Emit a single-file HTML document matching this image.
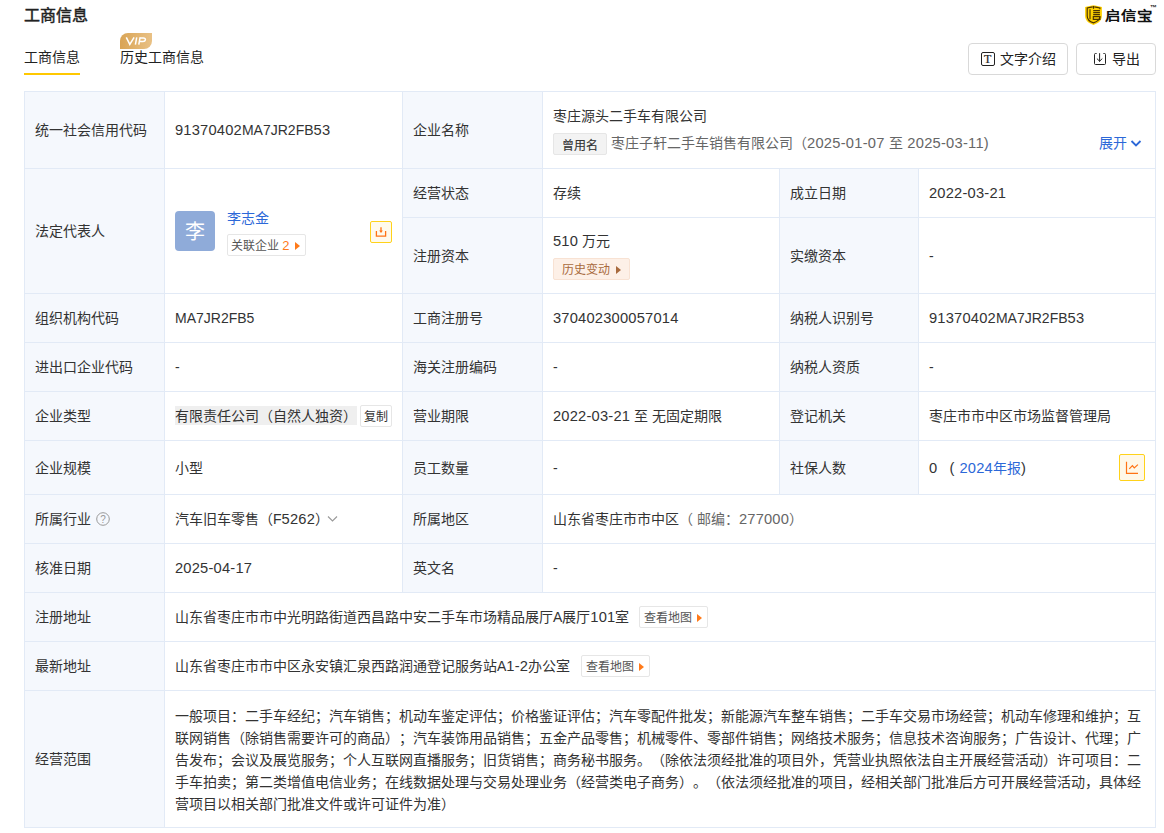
<!DOCTYPE html>
<html lang="zh-CN"><head><meta charset="utf-8">
<style>
*{box-sizing:border-box}
html,body{margin:0;padding:0}
body{width:1164px;height:833px;overflow:hidden;background:#fff;font-family:"Liberation Sans",sans-serif;font-size:14px;color:#333;position:relative;text-spacing-trim:space-all}
.a{position:absolute;white-space:nowrap;line-height:20px}
.bg{position:absolute;background:#f5f8fd}
.h{position:absolute;height:1px;background:#e2eaf6;left:24px;width:1132px}
.v{position:absolute;width:1px;background:#e2eaf6}
.c{position:absolute;display:flex;align-items:center;white-space:nowrap;line-height:20px}
.blue{color:#2c68d8}
.n{font-size:14.7px;letter-spacing:.2px}
.tag{display:inline-block;border:1px solid #e6e6e6;border-radius:2px;font-size:12px;line-height:20px;height:22px;padding-top:1px!important;color:#555;padding:0 4px;background:#fff}
.tri{display:inline-block;width:0;height:0;border-left:5px solid #ff7a1a;border-top:4px solid transparent;border-bottom:4px solid transparent;margin-left:5px;vertical-align:0px}
</style></head><body>

<!-- header -->
<div class="a" id="title" style="left:24px;top:5px;font-size:16px;font-weight:400;-webkit-text-stroke:.45px #222;color:#222;line-height:22px">工商信息</div>

<!-- logo -->
<svg class="a" style="left:1085px;top:5px" width="17" height="20" viewBox="0 0 17 20">
  <path d="M8.5 0.2 C11 0.7 14 1.3 16.9 1.9 V10.8 C16.9 15.6 13 18.6 8.5 20 C4 18.6 0.1 15.6 0.1 10.8 V1.9 C3 1.3 6 0.7 8.5 0.2 Z" fill="#ffd100"/>
  <g stroke="#4a3200" stroke-width="1.15" fill="none">
  <path d="M7.7 1.9 L2.2 3 V11 C2.2 14.6 5 16.8 8.5 17.9 C12 16.8 14.9 14.6 14.9 11.6"/>
  <path d="M9.3 1.9 L14.9 3 V4.2"/>
  <path d="M8.5 1 V3.8"/>
  <path d="M5 4.2 V14.2"/>
  <path d="M8.2 5.6 H14.9 M8.2 7.6 H14.9 M8.2 9.6 H14.9"/>
  <path d="M8.3 11.6 H14.9 V14.4 H8.3 Z"/>
  </g>
</svg>
<div class="a" id="logo" style="left:1105px;top:8px;font-size:15.5px;font-weight:bold;color:#111;line-height:20px;transform:scaleY(.82);transform-origin:0 0">启信宝</div>
<div class="a" style="left:1150px;top:4px;font-size:7px;font-weight:bold;line-height:8px;color:#222">™</div>

<!-- tabs -->
<div class="a" id="tab1" style="left:24px;top:47px;color:#222">工商信息</div>
<div style="position:absolute;left:24px;top:73px;width:56px;height:2px;background:#ffc800"></div>
<div style="position:absolute;left:120px;top:33px;width:32px;height:16px;border-radius:8px 0 8px 0;background:linear-gradient(90deg,#d9a455,#e9c185)"></div>
<svg class="a" style="left:116px;top:30px" width="40" height="22" viewBox="0 0 40 22"><path d="M10.3 7.3 L13.8 14.4 L18.1 7.3 M20.7 7.3 L19.4 14.6 M24.1 7.3 L22.8 14.6 M23.6 7.9 H27.3 C28.9 7.9 29.6 8.7 29.4 9.7 C29.2 10.9 28.2 11.6 26.8 11.6 H23.4" stroke="#fff" stroke-width="1.5" fill="none"/></svg>
<div class="a" id="tab2" style="left:120px;top:47px;color:#222">历史工商信息</div>

<!-- buttons -->
<div style="position:absolute;left:968px;top:43px;width:100px;height:32px;border:1px solid #d9d9d9;border-radius:4px"></div>
<div style="position:absolute;left:981px;top:52px;width:14px;height:14px;border:1px solid #222;border-radius:2px"></div>
<div class="a" style="left:984px;top:51px;font-family:'Liberation Serif',serif;font-size:12px;line-height:16px;color:#222;-webkit-text-stroke:.2px #222">T</div>
<div class="a" style="left:1000px;top:49px;color:#222">文字介绍</div>
<div style="position:absolute;left:1076px;top:43px;width:80px;height:32px;border:1px solid #d9d9d9;border-radius:4px"></div>
<svg class="a" style="left:1093px;top:52px" width="14" height="14" viewBox="0 0 14 14"><path d="M3.6 1.5 H2.5 Q1.5 1.5 1.5 2.5 V11.5 Q1.5 12.5 2.5 12.5 H11.5 Q12.5 12.5 12.5 11.5 V2.5 Q12.5 1.5 11.5 1.5 H10.4 M6.6 1.2 V9.6 M3.9 6.6 L6.6 9.2 L9.3 6.6" stroke="#222" stroke-width="1" fill="none"/></svg>
<div class="a" style="left:1112px;top:49px;color:#222">导出</div>

<!-- table backgrounds -->
<div class="bg" style="left:25px;top:92px;width:139px;height:735px"></div>
<div class="bg" style="left:403px;top:92px;width:139px;height:500px"></div>
<div class="bg" style="left:780px;top:169px;width:138px;height:325px"></div>

<!-- horizontal lines -->
<div class="h" style="top:91px"></div>
<div class="h" style="top:168px"></div>
<div class="h" style="top:217px;left:402px;width:754px"></div>
<div class="h" style="top:293px"></div>
<div class="h" style="top:342px"></div>
<div class="h" style="top:391px"></div>
<div class="h" style="top:440px"></div>
<div class="h" style="top:494px"></div>
<div class="h" style="top:543px"></div>
<div class="h" style="top:592px"></div>
<div class="h" style="top:641px"></div>
<div class="h" style="top:690px"></div>
<div class="h" style="top:827px"></div>
<!-- vertical lines -->
<div class="v" style="left:24px;top:91px;height:737px"></div>
<div class="v" style="left:164px;top:91px;height:737px"></div>
<div class="v" style="left:402px;top:91px;height:502px"></div>
<div class="v" style="left:542px;top:91px;height:502px"></div>
<div class="v" style="left:779px;top:168px;height:327px"></div>
<div class="v" style="left:918px;top:168px;height:327px"></div>
<div class="v" style="left:1155px;top:91px;height:737px"></div>

<!-- row 1 -->
<div class="c" style="left:35px;top:92px;height:76px"><span>统一社会信用代码</span></div>
<div class="c" style="left:175px;top:92px;height:76px"><span><span class="n">91370402</span>MA7JR2FB<span class="n">53</span></span></div>
<div class="c" style="left:413px;top:92px;height:76px"><span>企业名称</span></div>
<div class="a" style="left:553px;top:106px">枣庄源头二手车有限公司</div>
<div class="a" style="left:553px;top:133px;width:54px;height:22px;background:#f3f3f3;border:1px solid #e6e6e6;border-radius:2px;font-size:12px;-webkit-text-stroke:.15px #333;line-height:20px;padding-top:1.5px;text-align:center;color:#333">曾用名</div>
<div class="a" style="left:611px;top:133px;color:#666">枣庄子轩二手车销售有限公司（<span class="n" style="letter-spacing:.25px">2025-01-07&nbsp;</span>至<span class="n" style="letter-spacing:.25px">&nbsp;2025-03-11</span><span class="n">)</span></div>
<div class="a blue" style="left:1099px;top:133px">展开</div>
<svg class="a" style="left:1130px;top:138.7px" width="12" height="9" viewBox="0 0 12 9"><path d="M1.5 2 L6 6.5 L10.5 2" stroke="#2c68d8" stroke-width="1.8" fill="none"/></svg>

<!-- row 2 -->
<div class="c" style="left:35px;top:169px;height:124px"><span>法定代表人</span></div>
<div style="position:absolute;left:175px;top:211px;width:40px;height:40px;border-radius:4px;background:#8fabd9;color:#fff;font-size:20px;line-height:43px;text-align:center">李</div>
<div class="a blue" style="left:227px;top:208px">李志金</div>
<div class="a tag" style="left:227px;top:234px;width:79px;padding-left:3px;color:#555">关联企业 <span style="color:#ff7a1a;font-size:13px">2</span><span class="tri"></span></div>
<div style="position:absolute;left:370px;top:221px;width:22px;height:22px;border:1px solid #ffd21a;border-radius:2px;background:#fffaec"></div>
<svg class="a" style="left:375px;top:226px" width="12" height="12" viewBox="0 0 12 12"><path d="M1.4 5 V10.2 H10.6 V5 M6 1.2 V5.2" stroke="#ff7314" stroke-width="1.3" fill="none"/><path d="M4.2 4.6 H7.8 L6 6.9 Z" fill="#ff7314"/></svg>

<div class="c" style="left:413px;top:169px;height:48px"><span>经营状态</span></div>
<div class="c" style="left:553px;top:169px;height:48px"><span>存续</span></div>
<div class="c" style="left:790px;top:169px;height:48px"><span>成立日期</span></div>
<div class="c" style="left:929px;top:169px;height:48px"><span><span class="n">2022-03-21</span></span></div>

<div class="c" style="left:413px;top:218px;height:75px"><span>注册资本</span></div>
<div class="a" style="left:553px;top:231px"><span class="n">510</span> 万元</div>
<div class="a" style="left:553px;top:258px;width:77px;height:22px;background:#fdf0e7;border:1px solid #f8e2d3;border-radius:2px;font-size:12px;line-height:20px;color:#a86a3d;padding-left:8px;padding-top:1px">历史变动<span class="tri" style="border-left-color:#a86a3d;margin-left:6px"></span></div>
<div class="c" style="left:790px;top:218px;height:75px"><span>实缴资本</span></div>
<div class="c" style="left:929px;top:218px;height:75px"><span>-</span></div>

<!-- row 3 -->
<div class="c" style="left:35px;top:294px;height:48px"><span>组织机构代码</span></div>
<div class="c" style="left:175px;top:294px;height:48px"><span>MA7JR2FB5</span></div>
<div class="c" style="left:413px;top:294px;height:48px"><span>工商注册号</span></div>
<div class="c" style="left:553px;top:294px;height:48px"><span><span class="n">370402300057014</span></span></div>
<div class="c" style="left:790px;top:294px;height:48px"><span>纳税人识别号</span></div>
<div class="c" style="left:929px;top:294px;height:48px"><span><span class="n">91370402</span>MA7JR2FB<span class="n">53</span></span></div>

<!-- row 4 -->
<div class="c" style="left:35px;top:343px;height:48px"><span>进出口企业代码</span></div>
<div class="c" style="left:175px;top:343px;height:48px"><span>-</span></div>
<div class="c" style="left:413px;top:343px;height:48px"><span>海关注册编码</span></div>
<div class="c" style="left:553px;top:343px;height:48px"><span>-</span></div>
<div class="c" style="left:790px;top:343px;height:48px"><span>纳税人资质</span></div>
<div class="c" style="left:929px;top:343px;height:48px"><span>-</span></div>

<!-- row 5 -->
<div class="c" style="left:35px;top:392px;height:48px"><span>企业类型</span></div>
<div style="position:absolute;left:175px;top:406px;width:182px;height:19px;background:#efefef"></div>
<div class="c" style="left:175px;top:392px;height:48px"><span>有限责任公司（自然人独资）</span></div>
<div class="a tag" style="left:360px;top:405px;width:32px;height:22px;padding:0;text-align:center;color:#333">复制</div>
<div class="c" style="left:413px;top:392px;height:48px"><span>营业期限</span></div>
<div class="c" style="left:553px;top:392px;height:48px"><span><span class="n">2022-03-21</span> 至 无固定期限</span></div>
<div class="c" style="left:790px;top:392px;height:48px"><span>登记机关</span></div>
<div class="c" style="left:929px;top:392px;height:48px"><span>枣庄市市中区市场监督管理局</span></div>

<!-- row 6 -->
<div class="c" style="left:35px;top:441px;height:53px"><span>企业规模</span></div>
<div class="c" style="left:175px;top:441px;height:53px"><span>小型</span></div>
<div class="c" style="left:413px;top:441px;height:53px"><span>员工数量</span></div>
<div class="c" style="left:553px;top:441px;height:53px"><span>-</span></div>
<div class="c" style="left:790px;top:441px;height:53px"><span>社保人数</span></div>
<div class="c" style="left:929px;top:441px;height:53px"><span><span class="n">0</span><span class="n" style="margin-left:12px">(</span><span class="blue" style="margin-left:5px"><span class="n">2024</span>年报</span><span class="n">)</span></span></div>
<div style="position:absolute;left:1119px;top:454px;width:26px;height:27px;border:1px solid #ffd21a;border-radius:2px;background:#fff8e8"></div>
<svg class="a" style="left:1125px;top:460px" width="14" height="14" viewBox="0 0 14 14"><path d="M1.5 1.8 V13.3 H13 M4.3 8.9 L7.4 5.6 L9.3 7.9 L12.9 4.6" stroke="#ff7314" stroke-width="1.2" fill="none"/></svg>

<!-- row 7 -->
<div class="c" style="left:35px;top:495px;height:48px"><span>所属行业</span></div>
<svg class="a" style="left:96px;top:512px" width="14" height="14" viewBox="0 0 14 14"><circle cx="7" cy="7" r="6.3" stroke="#999" stroke-width="1" fill="none"/><text x="7" y="10.6" font-size="10" text-anchor="middle" fill="#999" font-family="Liberation Sans">?</text></svg>
<div class="c" style="left:175px;top:495px;height:48px"><span>汽车旧车零售（F<span class="n">5262</span>）</span></div>
<svg class="a" style="left:327px;top:515px" width="11" height="8" viewBox="0 0 11 8"><path d="M1 1.5 L5.5 6 L10 1.5" stroke="#999" stroke-width="1.1" fill="none"/></svg>
<div class="c" style="left:413px;top:495px;height:48px"><span>所属地区</span></div>
<div class="c" style="left:553px;top:495px;height:48px"><span>山东省枣庄市市中区<span style="color:#666">（ 邮编：<span class="n">277000</span>）</span></span></div>

<!-- row 8 -->
<div class="c" style="left:35px;top:544px;height:48px"><span>核准日期</span></div>
<div class="c" style="left:175px;top:544px;height:48px"><span><span class="n">2025-04-17</span></span></div>
<div class="c" style="left:413px;top:544px;height:48px"><span>英文名</span></div>
<div class="c" style="left:553px;top:544px;height:48px"><span>-</span></div>

<!-- row 9 -->
<div class="c" style="left:35px;top:593px;height:48px"><span>注册地址</span></div>
<div class="c" style="left:175px;top:593px;height:48px"><span>山东省枣庄市市中光明路街道西昌路中安二手车市场精品展厅A展厅<span class="n">101</span>室</span></div>
<div class="a tag" style="left:639px;top:606px;width:69px;padding-left:4px">查看地图<span class="tri"></span></div>

<!-- row 10 -->
<div class="c" style="left:35px;top:642px;height:48px"><span>最新地址</span></div>
<div class="c" style="left:175px;top:642px;height:48px"><span>山东省枣庄市市中区永安镇汇泉西路润通登记服务站A<span class="n">1-2</span>办公室</span></div>
<div class="a tag" style="left:581px;top:655px;width:69px;padding-left:4px">查看地图<span class="tri"></span></div>

<!-- row 11 -->
<div class="c" style="left:35px;top:691px;height:136px"><span>经营范围</span></div>
<div class="a" style="left:175px;top:705px;line-height:22px">一般项目：二手车经纪；汽车销售；机动车鉴定评估；价格鉴证评估；汽车零配件批发；新能源汽车整车销售；二手车交易市场经营；机动车修理和维护；互<br>联网销售（除销售需要许可的商品）；汽车装饰用品销售；五金产品零售；机械零件、零部件销售；网络技术服务；信息技术咨询服务；广告设计、代理；广<br>告发布；会议及展览服务；个人互联网直播服务；旧货销售；商务秘书服务。（除依法须经批准的项目外，凭营业执照依法自主开展经营活动）许可项目：二<br>手车拍卖；第二类增值电信业务；在线数据处理与交易处理业务（经营类电子商务）。（依法须经批准的项目，经相关部门批准后方可开展经营活动，具体经<br>营项目以相关部门批准文件或许可证件为准）</div>

</body></html>
